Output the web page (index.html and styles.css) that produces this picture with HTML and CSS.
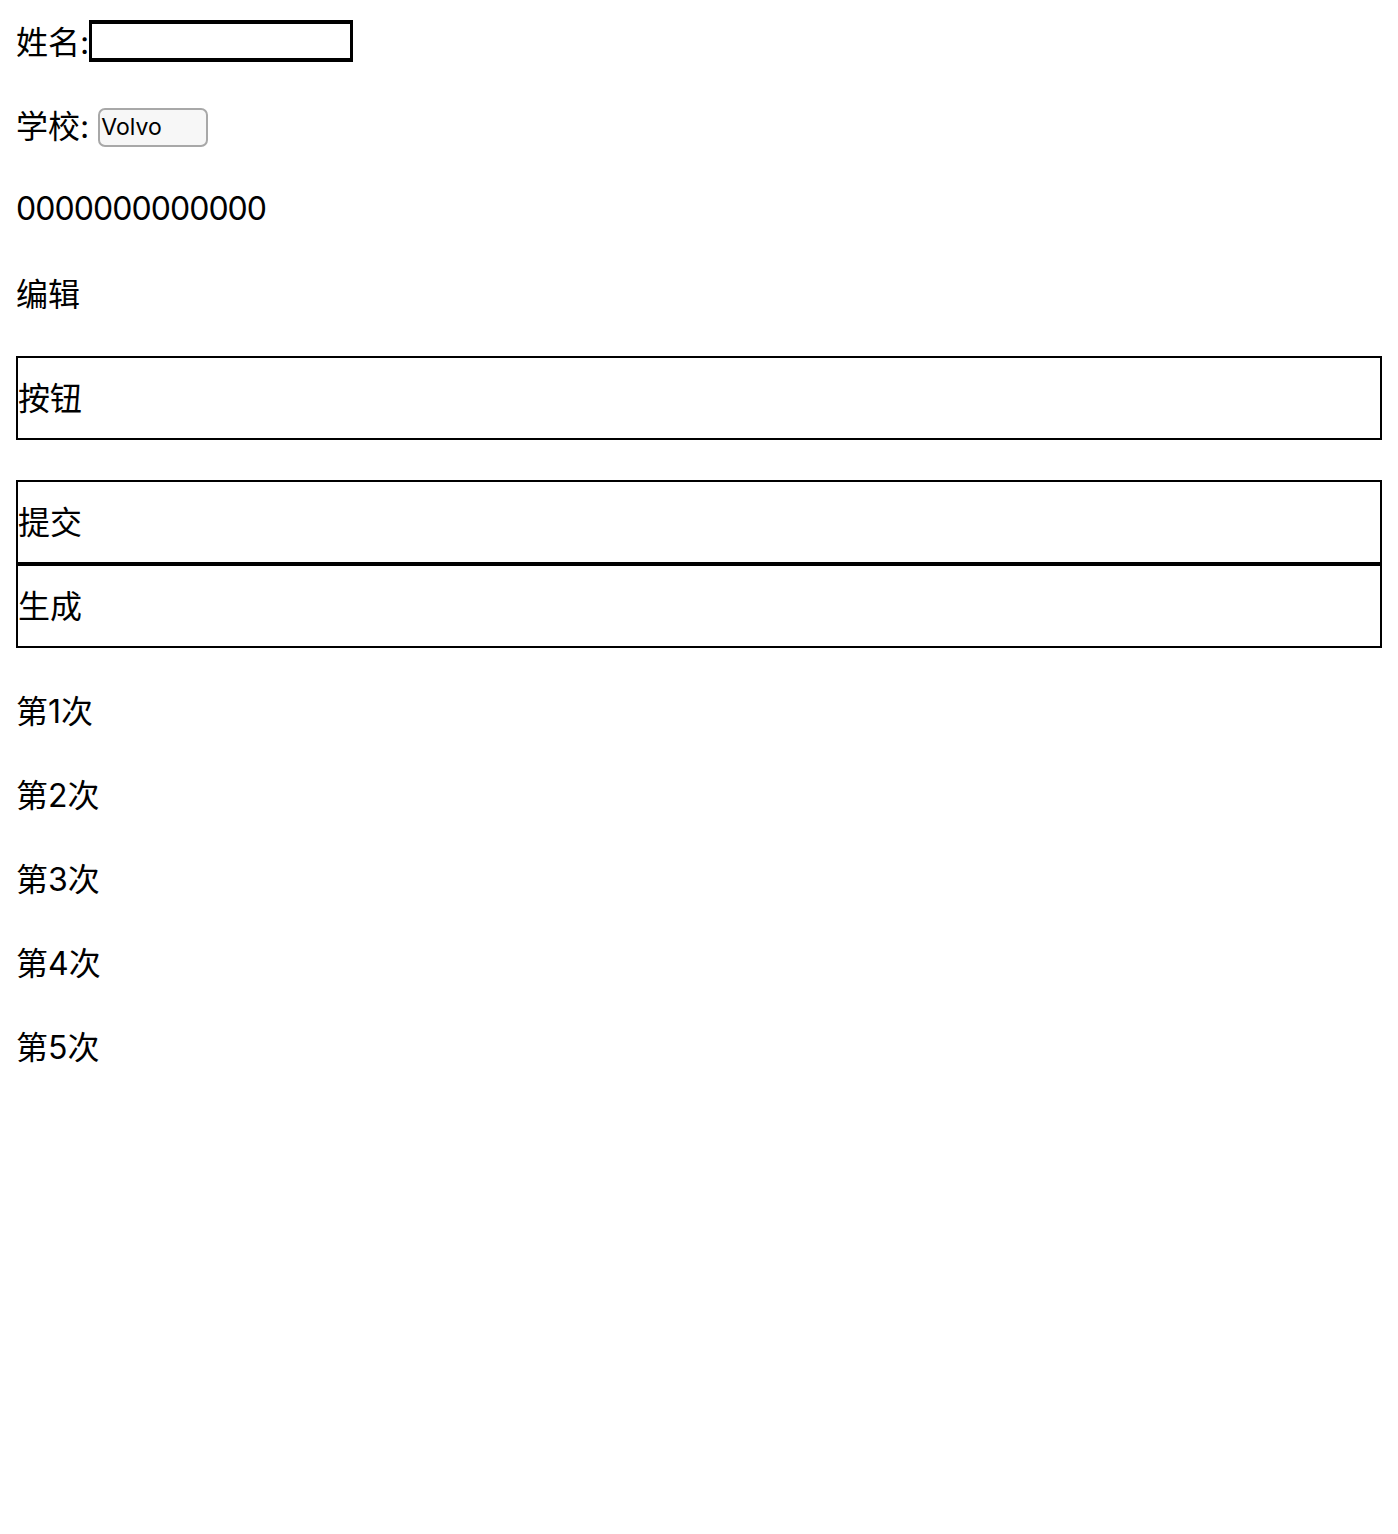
FILE: index.html
```html
<!DOCTYPE html>
<html lang="zh-CN">
<head>
<meta charset="utf-8">
<title>表单</title>
<link rel="stylesheet" href="styles.css">
</head>
<body>
<div class="row"><span>姓名:</span><input class="name-input" type="text"></div>
<div class="row"><span>学校:&nbsp;</span><select class="school"><option>Volvo</option></select></div>
<div class="row digits">0000000000000</div>
<div class="row">编辑</div>
<div class="box box-first">按钮</div>
<div class="group">
  <div class="box">提交</div>
  <div class="box">生成</div>
</div>
<div class="list">
  <div class="row">第1次</div>
  <div class="row">第2次</div>
  <div class="row">第3次</div>
  <div class="row">第4次</div>
  <div class="row">第5次</div>
</div>
</body>
</html>
```
FILE: styles.css
```css
html, body {
  background: #fff;
}
body {
  margin: 16px;
  font-family: Inter, "Noto Sans CJK SC", sans-serif;
  font-size: 32px;
  color: #000;
  display: flex;
  flex-direction: column;
  gap: 32px;
}
.row {
  box-sizing: border-box;
  height: 52px;
  padding-bottom: 4px;
  display: flex;
  align-items: center;
  white-space: pre;
}
.digits {
  letter-spacing: -0.95px;
}
.name-input {
  box-sizing: border-box;
  width: 264px;
  height: 42px;
  margin: 2px 0 0 0;
  padding: 0;
  border: 4px solid #000;
  border-left-width: 3px;
  border-right-width: 3px;
  background: #fff;
  font-size: 22px;
  outline: none;
}
.school {
  appearance: none;
  -webkit-appearance: none;
  box-sizing: border-box;
  width: 110px;
  height: 39px;
  margin: 6px 0 0 0;
  padding: 0 0 0 1px;
  border: 2px solid #a8a8a8;
  border-radius: 7px;
  background: #f7f7f7;
  color: #000;
  font-family: Inter, "Liberation Sans", sans-serif;
  font-size: 23px;
}
.box {
  box-sizing: border-box;
  height: 84px;
  border: 2px solid #000;
  display: flex;
  align-items: center;
  padding: 0 0 4px 0;
}
.box-first {
  margin-top: 4px;
  margin-bottom: 8px;
}
.group {
  display: flex;
  flex-direction: column;
}
.list {
  margin-top: 5px;
  display: flex;
  flex-direction: column;
  gap: 32px;
}
```
